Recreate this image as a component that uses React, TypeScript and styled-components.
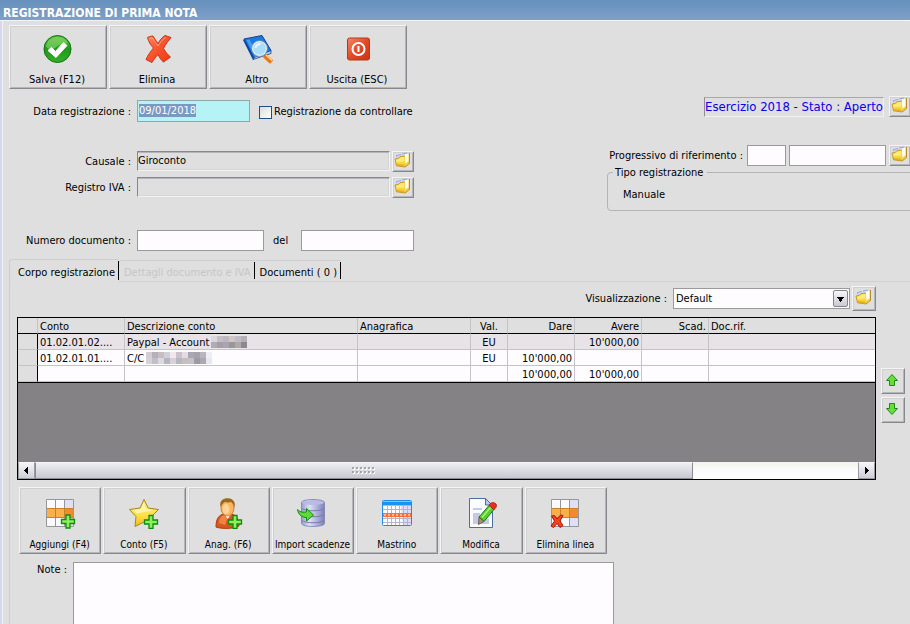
import React, { useEffect, useRef } from "react";
import styled, { createGlobalStyle, css } from "styled-components";

const FACE = "#dfdfdf";
const FIELD = "#fffcff";
const LINE = "#9a9a9a";

const GlobalStyle = createGlobalStyle`
  *, *::before, *::after { box-sizing: border-box; }
  body {
    margin: 0;
    background: ${FACE};
    color: #000;
    font: 11px/16px "DejaVu Sans Condensed", "DejaVu Sans", sans-serif;
    overflow-x: hidden;
  }
  button, input, select, textarea { font: inherit; color: inherit; border-radius: 0; margin: 0; }
`;

/* ---------- layout ---------- */

const Window = styled.div`
  display: flex;
  flex-direction: column;
  min-height: 100vh;
  overflow: hidden;
`;

const TitleBar = styled.h1`
  margin: 0;
  height: 21px;
  padding: 3px 3px 0;
  border-bottom: 1px solid #f2f4f7;
  background: linear-gradient(#6690bd, #7ea0c8);
  color: #fff;
  font-size: 12px;
  line-height: 20px;
`;

const Body = styled.main`
  flex: 1;
  display: flex;
  flex-direction: column;
  border-left: 2px solid #d5d9ea;
  box-shadow: inset 1px 0 #f0f1f6;
  padding: 4px 0 0 7px;
`;

const Toolbar = styled.div`
  display: flex;
  gap: 2px;
`;

const FormArea = styled.div`
  display: flex;
  justify-content: space-between;
  padding-top: 7px;
`;

const FormColumn = styled.div`
  display: flex;
  flex-direction: column;
  width: 406px;
  padding-top: 4px;
`;

const SideColumn = styled.div`
  display: flex;
  flex-direction: column;
  width: 303px;
  flex: none;
`;

const FormRow = styled.div<{ $top?: number }>`
  display: flex;
  align-items: center;
  height: 22px;
  margin-top: ${(p) => p.$top ?? 0}px;
`;

const SideRow = styled.div<{ $top?: number }>`
  display: flex;
  align-items: center;
  justify-content: flex-end;
  gap: 3px;
  height: 21px;
  margin: ${(p) => p.$top ?? 0}px -1px 0 0;
`;

const FieldLabel = styled.label`
  width: 128px;
  flex: none;
  padding: 1px 6px 0 0;
  text-align: right;
  white-space: nowrap;
`;

const InlineLabel = styled.label<{ $gap: number }>`
  padding: 1px ${(p) => p.$gap}px 0 0;
  white-space: nowrap;
`;

const BetweenLabel = styled.label`
  width: 37px;
  padding: 1px 0 0 9px;
`;

/* ---------- controls ---------- */

const raised = css`
  background: ${FACE};
  border: 1px solid;
  border-color: #f4f4f4 #88888f #88888f #f4f4f4;
  box-shadow: inset 1px 1px #d0d0d0, inset -1px -1px #b4b4b9;
`;

const ToolButton = styled.button`
  ${raised}
  display: flex;
  flex-direction: column;
  align-items: center;
  justify-content: flex-end;
  gap: 7px;
  width: 98px;
  height: 64px;
  padding: 0 2px 0 0;
  svg { width: 32px; height: 32px; }
`;

const ActionButton = styled.button`
  ${raised}
  display: flex;
  flex-direction: column;
  align-items: center;
  justify-content: flex-end;
  gap: 8px;
  height: 67px;
  padding: 0 1px 0 0;
  font-size: 10px;
  line-height: 16px;
  white-space: nowrap;
  svg { width: 32px; height: 32px; }
`;

const IconButton = styled.button<{ $w?: number; $h?: number }>`
  ${raised}
  display: flex;
  align-items: center;
  justify-content: center;
  flex: none;
  width: ${(p) => p.$w ?? 22}px;
  height: ${(p) => p.$h ?? 21}px;
  padding: 0 2px 2px 0;
`;

const TextBox = styled.input<{ $w: number }>`
  width: ${(p) => p.$w}px;
  height: 21px;
  padding: 0 1px;
  border: 1px solid ${LINE};
  background: ${FIELD};
  outline: none;
`;

const DateBox = styled(TextBox)`
  height: 22px;
  padding: 0 1px 2px;
  border-color: #8fa9a9;
  background: #b5f3f6;
  &::selection { background: #7b98c3; color: #fff; }
`;

const SunkenBox = styled.input`
  width: 253px;
  height: 20px;
  margin-right: 2px;
  padding: 0 0 1px;
  background: ${FACE};
  border: 1px solid;
  border-color: #88888e #f2f2f2 #f2f2f2 #88888e;
  box-shadow: inset 0 1px #b4b4b9, inset -1px -1px #d6d6d6;
  outline: none;
`;

const StatusBox = styled.output`
  margin-right: 2px;
  padding: 0;
  height: 20px;
  border: 1px solid;
  border-color: #a8a8a8 #f2f2f2 #f2f2f2 #8e8e92;
  color: #0a00f0;
  font-size: 13px;
  line-height: 18px;
  white-space: nowrap;
`;

const CheckLabel = styled.label`
  display: flex;
  align-items: center;
  gap: 2px;
  margin-left: 9px;
  padding-top: 2px;
  white-space: nowrap;
`;

const CheckBox = styled.input`
  appearance: none;
  width: 13px;
  height: 13px;
  border: 1px solid #1f4f86;
  background: linear-gradient(135deg, #dcdcda, #fff);
  &:checked { background: #1f4f86; }
`;

const TypeGroup = styled.fieldset`
  min-width: 0;
  height: 46px;
  margin: -1px -8px 0 0;
  padding: 8px 15px 0;
  border: 1px solid #b4b4b4;
  border-radius: 4px;
  legend { margin-left: -10px; padding: 1px 4px 0 2px; height: 14px; line-height: 14px; }
`;

/* ---------- tabs ---------- */

const TabList = styled.div`
  display: flex;
  align-items: flex-end;
  margin-top: 8px;
`;

const Tab = styled.button<{ $active?: boolean }>`
  position: relative;
  height: ${(p) => (p.$active ? 23 : 21)}px;
  margin-bottom: ${(p) => (p.$active ? -1 : 0)}px;
  padding: 3px 4px 0 ${(p) => (p.$active ? 8 : 5)}px;
  border: 1px solid #cdcdcd;
  border-width: 1px 0 0 ${(p) => (p.$active ? 1 : 0)}px;
  border-radius: 3px 0 0 0;
  background: ${FACE};
  white-space: nowrap;
  &::after {
    content: "";
    position: absolute;
    right: 0;
    top: 1px;
    bottom: 2px;
    width: 1px;
    background: #000;
  }
  &:disabled { color: #c6c6c6; }
`;

const TabPanel = styled.section`
  flex: 1;
  display: flex;
  flex-direction: column;
  border: 1px solid #cfcfcf;
  border-width: 1px 0 0 1px;
  padding: 4px 5px 0 7px;
`;

const ViewRow = styled.div`
  display: flex;
  align-items: center;
  justify-content: flex-end;
  gap: 2px;
  height: 25px;
  margin-right: 29px;
`;

const SelectWrap = styled.span`
  position: relative;
  width: 177px;
  height: 21px;
`;

const Select = styled.select`
  appearance: none;
  width: 100%;
  height: 100%;
  padding: 1px 20px 0 2px;
  border: 1px solid ${LINE};
  background: ${FIELD};
  outline: none;
`;

const SelectArrow = styled.span`
  position: absolute;
  right: 2px;
  top: 2px;
  width: 15px;
  height: 17px;
  display: flex;
  align-items: center;
  justify-content: center;
  border: 1px solid #85858f;
  border-radius: 2px;
  background: linear-gradient(#f6f6fa, #c9c9d2);
  pointer-events: none;
`;

/* ---------- grid ---------- */

const GridRow = styled.div`
  display: flex;
  align-items: flex-start;
  gap: 5px;
  margin-top: 6px;
`;

const GridFrame = styled.div`
  flex: 1;
  min-width: 0;
  display: flex;
  flex-direction: column;
  height: 163px;
  border: 1px solid #000;
  background: #848284;
`;

const Ledger = styled.table`
  width: 100%;
  table-layout: fixed;
  border-collapse: separate;
  border-spacing: 0;
  border-bottom: 1px solid #000;
`;

const Cell = styled.td<{ $align?: "left" | "center" | "right" }>`
  height: 16px;
  padding: 2px 2px 0;
  border: solid #c4c4c6;
  border-width: 0 1px 1px 0;
  text-align: ${(p) => p.$align ?? "left"};
  line-height: 13px;
  white-space: nowrap;
  overflow: hidden;
  &:last-child { border-right: 0; }
`;

const HeadCell = styled(Cell).attrs({ as: "th", scope: "col" })`
  background: ${FACE};
  border-bottom-color: #000;
  font-weight: normal;
`;

const Marker = styled(Cell)`
  background: ${FACE};
  border-right-color: #000;
`;

const Line = styled.tr<{ $selected?: boolean }>`
  background: ${(p) => (p.$selected ? "#e8e3e7" : FIELD)};
`;

const Mosaic = styled.svg`
  vertical-align: top;
  margin-left: 2px;
`;

const ScrollBar = styled.div`
  display: flex;
  height: 17px;
  margin-top: auto;
  background: linear-gradient(#f3f3ea, #fdfdff 60%, #fff);
`;

const ScrollButton = styled.button`
  display: flex;
  align-items: center;
  justify-content: center;
  width: 17px;
  padding: 0;
  border: 1px solid #9a9aa4;
  border-top-color: #f6f6fa;
  background: linear-gradient(#f4f4f8, #cfcfd8);
`;

const ScrollThumb = styled.div`
  flex: 0 0 80%;
  display: flex;
  align-items: center;
  justify-content: center;
  border: 1px solid #8b8b95;
  border-top-color: #f6f6fa;
  background: linear-gradient(#eeeef4, #c8c8d2);
`;

const ScrollTrack = styled.div`
  flex: 1;
  display: flex;
`;

const MoveButtons = styled.div`
  display: flex;
  flex-direction: column;
  gap: 3px;
  margin-top: 51px;
`;

const Actions = styled.div`
  display: grid;
  grid-template-columns: repeat(7, 1fr);
  gap: 2px;
  width: 588px;
  margin: 7px 0 0 2px;
`;

const NoteRow = styled.div`
  flex: 1;
  display: flex;
  margin-top: 8px;
  min-height: 62px;
  label { width: 56px; padding: 0 6px 0 0; text-align: right; }
`;

const NoteBox = styled.textarea`
  width: 541px;
  border: 1px solid ${LINE};
  border-bottom: 0;
  background: ${FIELD};
  resize: none;
  outline: none;
`;

/* ---------- icons ---------- */

const FolderIcon = () => (
  <svg width="17" height="17" viewBox="0 0 17 17" aria-hidden="true">
    <path d="M2 7l.5-3L7 3l4-1.500L15 .5v5z" fill="#d3d8ee" />
    <path d="M2.500 5V3.500L7 2.500M8 2l5-1" fill="none" stroke="#8fa8e4" />
    <path d="M11 4.500l1.500-2.500 3-1v10L11 15z" fill="#f3cf4c" />
    <path d="M10.500 2.800l4-1.300v7.500l-3 2.500z" fill="#fffef2" />
    <path d="M15.500 1v10.500L11 15" fill="none" stroke="#a9770f" strokeWidth=".8" />
    <path d="M1 7l3.500-.8L6 4.600l5-.6v11L2.500 13.800z" fill="#f9d638" />
    <path d="M2 7.800l3-.7L6.500 5.500l3.700-.4v4.400L2.500 10.300z" fill="#fdec78" />
    <path d="M2.500 11.800l8 .8V14.500L2.800 13.500z" fill="#e9b428" />
    <path d="M1 7l3.500-.8L6 4.600l5-.6M1 7l1.500 6.800L11 15" fill="none" stroke="#b98a1c" strokeWidth=".8" />
  </svg>
);

const CheckIcon = () => (
  <svg viewBox="0 0 32 32" aria-hidden="true">
    <defs>
      <linearGradient id="green" x2="0" y2="1">
        <stop offset="0" stopColor="#5cc23a" />
        <stop offset=".5" stopColor="#1f9a1a" />
        <stop offset="1" stopColor="#35b025" />
      </linearGradient>
    </defs>
    <circle cx="16.500" cy="16" r="13.500" fill="url(#green)" stroke="#11700f" />
    <path d="M5 13a12 12 0 0 1 22-3c-5 1-9 1-13 5-3 2-7 2-9-2z" fill="#8fd874" opacity=".6" />
    <path d="M7 17.500l3.500-3 4 4 8-9 3.500 3L15 24.500z" fill="#fff" stroke="#fff" strokeLinejoin="round" />
  </svg>
);

const CrossIcon = () => (
  <svg viewBox="0 0 32 32" aria-hidden="true">
    <defs>
      <linearGradient id="red" x2="1" y2="1">
        <stop offset="0" stopColor="#ff8a60" />
        <stop offset=".5" stopColor="#f8512c" />
        <stop offset="1" stopColor="#ee3a14" />
      </linearGradient>
    </defs>
    <path
      d="M6.500 4.500c2-1 4-1.500 5.500-1.500 1.500 2.500 3 5 5 7.500 2-3.500 4-6 7-8l6 2c-3 3.500-5.500 7-7.500 11 2 3.500 4 6 7 8.500l-7 5c-2.500-2-4-4.500-5.500-7.500-2.500 2.500-4.500 5.500-6 8l-6-3c2-4.500 4.500-8 7.500-11.500-3-3-5-6.500-6-10.500z"
      fill="url(#red)" stroke="#cf3212" strokeLinejoin="round"
    />
    <path d="M8.500 5.500l3-.5c1.500 3 3.500 5.500 5.500 8 2-3.500 4.500-6.500 7.500-8.500" fill="none" stroke="#ff9d7c" />
  </svg>
);

const BookIcon = () => (
  <svg viewBox="0 0 32 32" aria-hidden="true">
    <path d="M2 7l2-1 9 19-1 2z" fill="#0d47a8" />
    <path d="M3 6l18-3.500 9 15L13 25z" fill="#1f78dc" stroke="#0c4299" />
    <path d="M12 26.500l18-6v-3L13 24.500z" fill="#b4cdf0" stroke="#0c4299" strokeWidth=".8" />
    <path d="M5.500 7l3-.6 8.500 16.500-3 1z" fill="#4a9cf0" />
    <path d="M23.500 22.500l7 6.500" stroke="#e97516" strokeWidth="4.500" />
    <path d="M25 22l6 5.500" stroke="#ffd28c" strokeWidth="1.500" />
    <circle cx="18.500" cy="15.500" r="7" fill="#a9def6" stroke="#e0eaf2" strokeWidth="1.500" />
    <circle cx="18.500" cy="15.500" r="8" fill="none" stroke="#6f8cb4" strokeWidth=".8" />
    <path d="M14.500 15a4.500 4.500 0 0 1 5-4" fill="none" stroke="#e6f7ff" strokeWidth="2" />
  </svg>
);

const PowerIcon = () => (
  <svg viewBox="0 0 32 32" aria-hidden="true">
    <defs>
      <linearGradient id="pow" x2="1" y2="1">
        <stop offset="0" stopColor="#f28a6a" />
        <stop offset=".5" stopColor="#e04a26" />
        <stop offset="1" stopColor="#c93412" />
      </linearGradient>
    </defs>
    <rect x="6.500" y="5" width="22" height="22" rx="2" fill="url(#pow)" stroke="#b5381a" />
    <circle cx="17.500" cy="16" r="6" fill="none" stroke="#fff" strokeWidth="2" />
    <path d="M17.500 13v6" stroke="#fff" strokeWidth="2" />
  </svg>
);

const Plus = () => (
  <path d="M21 18.500h4v4.500h4.500v4h-4.500v4.500h-4V27h-4.500v-4H21z" fill="#8cf05a" stroke="#0f8a12" strokeWidth="1.300" />
);

const SheetCells = () => (
  <>
    <rect x="2.500" y="2.500" width="27" height="27" fill="#f9f9fe" />
    <path d="M20 3h9v8h-9zM20 21h9v8h-9z" fill="#dfe0f4" />
    <rect x="2.500" y="11.500" width="27" height="9" fill="#f9b04a" />
    <rect x="20.500" y="11.500" width="9" height="9" fill="#f58a2a" />
    <path d="M2.500 2.500h27v27h-27zM11.500 2.500v27M20.500 2.500v27M2.500 11.500h27M2.500 20.500h27" fill="none" stroke="#96969a" />
    <path d="M3 11.500h26M3 20.500h26M11.500 12v8M20.500 12v8" stroke="#c9802c" />
  </>
);

const AddRowIcon = () => (
  <svg viewBox="0 0 32 32" aria-hidden="true">
    <SheetCells />
    <g transform="translate(1 -.5)"><Plus /></g>
  </svg>
);

const DeleteRowIcon = () => (
  <svg viewBox="0 0 32 32" aria-hidden="true">
    <SheetCells />
    <path d="M2.500 19l3-.5 2.500 3.500 3.500-4 2.500.5-3 5.500 3 4.500-3 2-3-4-3.500 4-2.500-1.500 3.500-5z" fill="#f4421e" stroke="#a81c08" />
  </svg>
);

const StarIcon = () => (
  <svg viewBox="0 0 32 32" aria-hidden="true">
    <defs>
      <linearGradient id="gold" x2="0" y2="1">
        <stop offset="0" stopColor="#fdf08c" />
        <stop offset=".6" stopColor="#fbe045" />
        <stop offset="1" stopColor="#f0b822" />
      </linearGradient>
    </defs>
    <path d="M16 2.500l4.300 8.500 10.200 1.500-7 7 1.500 8.500-9-3-9 4.500 1-10-6.500-7L12 11z" fill="url(#gold)" stroke="#a8851c" strokeLinejoin="round" />
    <path d="M15.500 6l2.500 6 7 1.500c-5 1-12 2-16 3l-4-3.500 8-1z" fill="#fffbd0" opacity=".7" />
    <Plus />
  </svg>
);

const UserIcon = () => (
  <svg viewBox="0 0 32 32" aria-hidden="true">
    <path d="M4 30c0-7 2-12 8-13h7c6 1 8 6 8 12-5 3-18 3-23 1z" fill="#d9581c" stroke="#a83c0c" />
    <path d="M7 26c0-4 2-7 5-8l3 4-2 6z" fill="#ef8446" />
    <path d="M12 17l3.500 5 4-5z" fill="#fff" />
    <ellipse cx="15.500" cy="11" rx="6.500" ry="8" fill="#f9b464" stroke="#c07422" strokeWidth=".8" />
    <ellipse cx="14" cy="12" rx="3.500" ry="5" fill="#ffd496" />
    <path d="M8.500 10C7 3 12 1 16 1.200c5 .3 8 4 6.500 9.300-.5-2-1.500-4-3-5.500-3 .8-5 .3-6.500 0-1.500 1-3.500 2.500-4.500 5z" fill="#9a6a1c" />
    <Plus />
  </svg>
);

const DatabaseIcon = () => (
  <svg viewBox="0 0 32 32" aria-hidden="true">
    <defs>
      <linearGradient id="drum">
        <stop offset="0" stopColor="#9a9dcc" />
        <stop offset=".35" stopColor="#dfe0f8" />
        <stop offset="1" stopColor="#7c80b8" />
      </linearGradient>
    </defs>
    <path d="M5.500 5.500c0-4 23-4 23 0v21c0 4-23 4-23 0z" fill="url(#drum)" stroke="#7c7fac" strokeWidth=".8" />
    <ellipse cx="17" cy="5.500" rx="11" ry="2.500" fill="#b9bbe4" />
    <path d="M6 11.500c3 3 19 3 22 0M6 17.500c3 3 19 3 22 0M6 23.500c3 3 19 3 22 0" fill="none" stroke="#777aab" />
    <path d="M1.500 12.500c3 3 6 3 9 2.500v-3.500l7 6.500-7 6v-3.500c-4 0-8-2-9-8z" fill="#5fd83a" stroke="#168a12" />
  </svg>
);

const CalendarIcon = () => (
  <svg viewBox="0 0 32 32" aria-hidden="true">
    <rect x="1.500" y="3.500" width="29" height="25" rx="1" fill="#fafaff" stroke="#1f8de8" />
    <rect x="2" y="4" width="28" height="4.500" fill="#1a93f4" />
    <path d="M2 4.500h28" stroke="#7cc6ff" />
    <path d="M20 9h10v19h-8z" fill="#dcdcf8" />
    <path d="M6.500 9v19M10.500 9v19M14.500 9v19M18.500 9v19M22.500 9v19M26.500 9v19M2 12.500h28M2 21.500h28M2 25.500h28" stroke="#b4b4cc" />
    <rect x="2" y="16" width="28" height="4" fill="#fb6e3c" />
    <path d="M3 18h26" stroke="#ffb896" strokeWidth="2" strokeDasharray="2 2" />
  </svg>
);

const EditIcon = () => (
  <svg viewBox="0 0 32 32" aria-hidden="true">
    <path d="M4.500 1.500h16l7 7v22h-23z" fill="#fafcff" stroke="#4f6c9e" />
    <path d="M20.500 1.500v6.500h6.500z" fill="#b4cdf2" stroke="#4f6c9e" />
    <path d="M8 11h9v2H8zM8 16h7v11H8zM16 22h8v5h-8z" fill="#c3cce2" />
    <path d="M14 20L24 8.500l5 4L19 24.500z" fill="#54cf2e" stroke="#1f7a12" />
    <path d="M17 20.500l9-10.500" stroke="#aaf27c" strokeWidth="1.500" />
    <path d="M14 20l5 4.500-5.500 3z" fill="#b09070" stroke="#5c4630" strokeWidth=".8" />
    <path d="M24 8.500c1-3.500 6-4 7.500-.5 0 2-1 3.500-2.500 4.500z" fill="#e8321c" stroke="#a81c10" strokeWidth=".8" />
  </svg>
);

const ArrowIcon = ({ down = false }: { down?: boolean }) => (
  <svg width="14" height="14" viewBox="0 0 14 14" aria-hidden="true">
    <path
      d={down ? "M4.500 1.500h5v5h3L7 12.500 1.500 6.500h3z" : "M4.500 12.500h5v-5h3L7 1.500 1.500 7.500h3z"}
      fill="#66e038" stroke="#1d8a16" strokeLinejoin="round"
    />
  </svg>
);

const Triangle = ({ points, size = 7 }: { points: string; size?: number }) => (
  <svg width={size} height={size} viewBox="0 0 7 7" shapeRendering="crispEdges" aria-hidden="true">
    <polygon points={points} />
  </svg>
);

const Grip = () => (
  <svg width="24" height="8" viewBox="0 0 24 8" shapeRendering="crispEdges" aria-hidden="true">
    {[0, 4].flatMap((y) =>
      [0, 4, 8, 12, 16, 20].map((x) => (
        <g key={`${x}-${y}`}>
          <rect x={x + 1} y={y + 1} width="2" height="2" fill="#fff" />
          <rect x={x} y={y} width="2" height="2" fill="#a4a4ae" />
        </g>
      ))
    )}
  </svg>
);

const Blocks = ({ top, bottom, label }: { top: string[]; bottom: string[]; label: string }) => (
  <Mosaic width={top.length * 6} height="12" shapeRendering="crispEdges" role="img" aria-label={label}>
    {[top, bottom].map((row, y) =>
      row.map((c, x) => <rect key={`${x}-${y}`} x={x * 6} y={y * 6} width="6" height="6" fill={c} />)
    )}
  </Mosaic>
);

/* ---------- data ---------- */

const TOOLS: [string, React.ReactNode][] = [
  ["Salva (F12)", <CheckIcon />],
  ["Elimina", <CrossIcon />],
  ["Altro", <BookIcon />],
  ["Uscita (ESC)", <PowerIcon />],
];

const ACTIONS: [string, React.ReactNode][] = [
  ["Aggiungi (F4)", <AddRowIcon />],
  ["Conto (F5)", <StarIcon />],
  ["Anag. (F6)", <UserIcon />],
  ["Import scadenze", <DatabaseIcon />],
  ["Mastrino", <CalendarIcon />],
  ["Modifica", <EditIcon />],
  ["Elimina linea", <DeleteRowIcon />],
];

type Align = "left" | "center" | "right";
const COLUMNS: { title: string; width?: number; align: Align }[] = [
  { title: "Conto", width: 87, align: "left" },
  { title: "Descrizione conto", width: 233, align: "left" },
  { title: "Anagrafica", width: 113, align: "left" },
  { title: "Val.", width: 37, align: "center" },
  { title: "Dare", width: 67, align: "right" },
  { title: "Avere", width: 67, align: "right" },
  { title: "Scad.", width: 67, align: "right" },
  { title: "Doc.rif.", align: "left" },
];

const ROWS: { selected?: boolean; cells: React.ReactNode[] }[] = [
  {
    selected: true,
    cells: [
      "01.02.01.02....",
      <>
        Paypal - Account
        <Blocks
          label="oscurato"
          top={["#dcd7dc", "#c4bfc6", "#bdb8bd", "#d0c6c6", "#c0bcc6", "#b4b0b6"]}
          bottom={["#b0acb2", "#a4a0a6", "#aaa4ac", "#9a969c", "#b2a8a8", "#8c888e"]}
        />
      </>,
      "", "EU", "", "10'000,00", "", "",
    ],
  },
  {
    cells: [
      "01.02.01.01....",
      <>
        C/C
        <Blocks
          label="oscurato"
          top={["#d4cdd2", "#b4b0bc", "#c9bebe", "#cfd0da", "#f0e8ee", "#c9c2cc", "#e2dce4", "#a8a6b2", "#a6a2aa", "#b8b4c0", "#eeeef6"]}
          bottom={["#d8d0d8", "#c2bec8", "#dad8e2", "#b8b4bc", "#d8d2d8", "#b6b6c2", "#c8beb8", "#c4c0cc", "#9e9aa4", "#aca8b0", "#e4e8f0"]}
        />
      </>,
      "", "EU", "10'000,00", "", "", "",
    ],
  },
  { cells: ["", "", "", "", "10'000,00", "10'000,00", "", ""] },
];

/* ---------- page ---------- */

export default function App() {
  const dateRef = useRef<HTMLInputElement>(null);
  useEffect(() => {
    dateRef.current?.focus();
    dateRef.current?.select();
  }, []);

  return (
    <Window>
      <GlobalStyle />
      <TitleBar>REGISTRAZIONE DI PRIMA NOTA</TitleBar>
      <Body>
        <Toolbar role="toolbar">
          {TOOLS.map(([label, icon]) => (
            <ToolButton key={label} type="button">{icon}{label}</ToolButton>
          ))}
        </Toolbar>

        <FormArea>
          <FormColumn>
            <FormRow>
              <FieldLabel htmlFor="data">Data registrazione :</FieldLabel>
              <DateBox id="data" ref={dateRef} $w={113} defaultValue="09/01/2018" />
              <CheckLabel>
                <CheckBox type="checkbox" />
                Registrazione da controllare
              </CheckLabel>
            </FormRow>
            <FormRow $top={28}>
              <FieldLabel htmlFor="causale">Causale :</FieldLabel>
              <SunkenBox id="causale" readOnly value="Giroconto" />
              <IconButton type="button" aria-label="Cerca causale"><FolderIcon /></IconButton>
            </FormRow>
            <FormRow $top={4}>
              <FieldLabel htmlFor="registro">Registro IVA :</FieldLabel>
              <SunkenBox id="registro" readOnly value="" />
              <IconButton type="button" aria-label="Cerca registro IVA"><FolderIcon /></IconButton>
            </FormRow>
            <FormRow $top={31}>
              <FieldLabel htmlFor="numero">Numero documento :</FieldLabel>
              <TextBox id="numero" $w={127} />
              <BetweenLabel htmlFor="del">del</BetweenLabel>
              <TextBox id="del" $w={113} />
            </FormRow>
          </FormColumn>

          <SideColumn>
            <SideRow>
              <StatusBox>Esercizio 2018 - Stato : Aperto</StatusBox>
              <IconButton type="button" aria-label="Cambia esercizio"><FolderIcon /></IconButton>
            </SideRow>
            <SideRow $top={28}>
              <InlineLabel htmlFor="prog" $gap={1}>Progressivo di riferimento :</InlineLabel>
              <TextBox id="prog" $w={39} />
              <TextBox $w={97} aria-label="Descrizione progressivo" />
              <IconButton type="button" aria-label="Cerca progressivo"><FolderIcon /></IconButton>
            </SideRow>
            <TypeGroup>
              <legend>Tipo registrazione</legend>
              Manuale
            </TypeGroup>
          </SideColumn>
        </FormArea>

        <TabList role="tablist">
          <Tab type="button" role="tab" aria-selected $active>Corpo registrazione</Tab>
          <Tab type="button" role="tab" disabled>Dettagli documento e IVA</Tab>
          <Tab type="button" role="tab">Documenti ( 0 )</Tab>
        </TabList>

        <TabPanel role="tabpanel">
          <ViewRow>
            <InlineLabel htmlFor="vista" $gap={4}>Visualizzazione :</InlineLabel>
            <SelectWrap>
              <Select id="vista" defaultValue="Default">
                <option>Default</option>
              </Select>
              <SelectArrow><Triangle points="0,2 7,2 3.5,6" size={9} /></SelectArrow>
            </SelectWrap>
            <IconButton type="button" $w={24} $h={25} aria-label="Gestisci visualizzazioni"><FolderIcon /></IconButton>
          </ViewRow>

          <GridRow>
            <GridFrame>
              <Ledger>
                <colgroup>
                  <col width={20} />
                  {COLUMNS.map((c) => <col key={c.title} width={c.width} />)}
                </colgroup>
                <thead>
                  <tr>
                    <HeadCell aria-label="Riga" />
                    {COLUMNS.map((c) => <HeadCell key={c.title} $align={c.align}>{c.title}</HeadCell>)}
                  </tr>
                </thead>
                <tbody>
                  {ROWS.map((r, i) => (
                    <Line key={i} $selected={r.selected}>
                      <Marker />
                      {r.cells.map((c, j) => <Cell key={j} $align={COLUMNS[j].align}>{c}</Cell>)}
                    </Line>
                  ))}
                </tbody>
              </Ledger>
              <ScrollBar>
                <ScrollButton type="button" aria-label="Scorri a sinistra"><Triangle points="5,0 5,7 1,3.5" /></ScrollButton>
                <ScrollTrack><ScrollThumb><Grip /></ScrollThumb></ScrollTrack>
                <ScrollButton type="button" aria-label="Scorri a destra"><Triangle points="2,0 2,7 6,3.5" /></ScrollButton>
              </ScrollBar>
            </GridFrame>
            <MoveButtons>
              <IconButton type="button" $w={24} $h={26} aria-label="Sposta su"><ArrowIcon /></IconButton>
              <IconButton type="button" $w={24} $h={26} aria-label="Sposta giù"><ArrowIcon down /></IconButton>
            </MoveButtons>
          </GridRow>

          <Actions role="toolbar">
            {ACTIONS.map(([label, icon]) => (
              <ActionButton key={label} type="button">{icon}{label}</ActionButton>
            ))}
          </Actions>

          <NoteRow>
            <label htmlFor="note">Note :</label>
            <NoteBox id="note" />
          </NoteRow>
        </TabPanel>
      </Body>
    </Window>
  );
}
